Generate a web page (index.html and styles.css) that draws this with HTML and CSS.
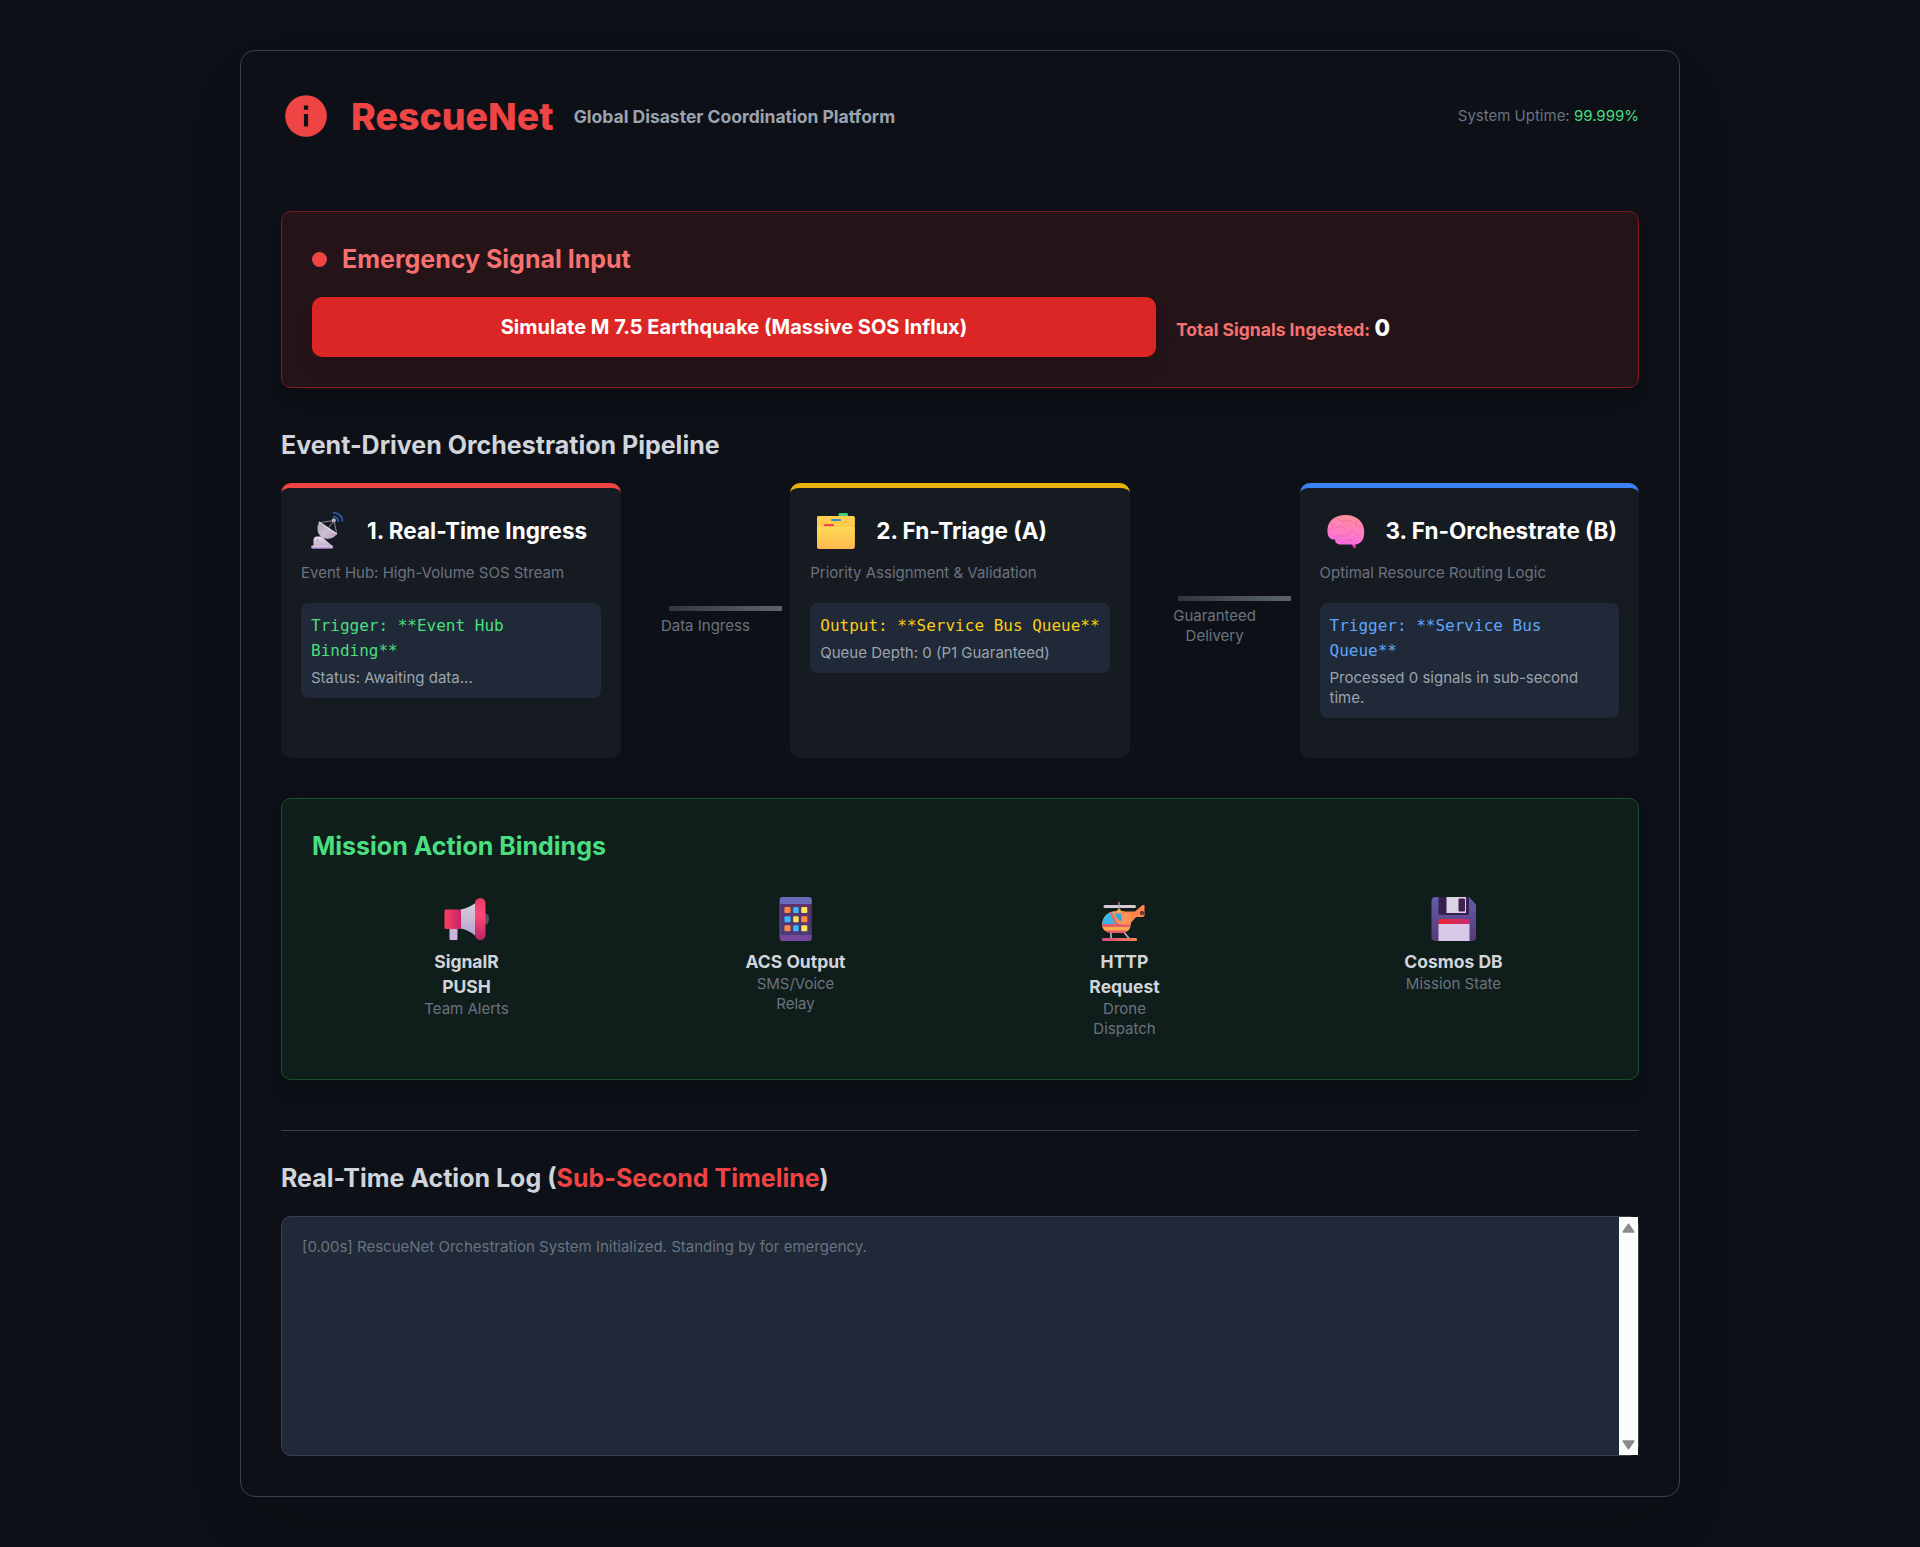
FILE: index.html
```html
<!DOCTYPE html>
<html lang="en">
<head>
<meta charset="UTF-8">
<title>RescueNet</title>
<link rel="stylesheet" href="styles.css">
</head>
<body>
<main class="shell">
  <header class="header">
    <div class="brand">
      <svg class="brand-icon" viewBox="0 0 24 24"><path fill="#ef4444" fill-rule="evenodd" d="M12 2a10 10 0 1 0 0 20 10 10 0 0 0 0-20zm1 15h-2v-6h2v6zm0-8h-2V7h2v2z"/></svg>
      <h1 class="brand-name">RescueNet</h1>
      <span class="brand-tag">Global Disaster Coordination Platform</span>
    </div>
    <div class="uptime">System Uptime: <span class="uptime-value">99.999%</span></div>
  </header>

  <section class="panel panel-red">
    <h2 class="panel-title title-red"><span class="dot"></span>Emergency Signal Input</h2>
    <div class="signal-row">
      <div class="signal-action"><button class="simulate">Simulate M 7.5 Earthquake (Massive SOS Influx)</button></div>
      <div class="signal-total">Total Signals Ingested: <span class="signal-count">0</span></div>
    </div>
  </section>

  <h2 class="section-title">Event-Driven Orchestration Pipeline</h2>
  <section class="pipeline">
    <article class="stage stage-red">
      <div class="stage-head">
        <svg class="stage-icon" viewBox="0 0 50 45">
          <defs>
            <linearGradient id="dish" x1="0" y1="0" x2="1" y2="1"><stop offset="0" stop-color="#a99fac"/><stop offset=".5" stop-color="#cdbfd2"/><stop offset="1" stop-color="#b39cbc"/></linearGradient>
            <linearGradient id="base" x1="0" y1="0" x2="0" y2="1"><stop offset="0" stop-color="#e6e0ea"/><stop offset="1" stop-color="#c3aed2"/></linearGradient>
          </defs>
          <path d="M12.500 38.500V32q0-3.500 3.500-3.500h4.500l11 9.500z" fill="url(#base)"/>
          <rect x="10.300" y="37.500" width="21.700" height="3" rx="1" fill="#d0c2db"/>
          <rect x="10.800" y="39.700" width="20.700" height="1" fill="#9869b8"/>
          <circle cx="16.700" cy="32.500" r="1.300" fill="#b9aec0"/>
          <path d="M18 14C14.500 21 17 28.500 23.500 30.500c5 1.300 9.500-.5 12.500-4.500z" fill="url(#dish)"/>
          <path d="M18 14l18 12" stroke="#e6dfe9" stroke-width="1.300"/>
          <path d="M20 14.500L33 12.500l2.500 12M33 12.500L27.500 20" fill="none" stroke="#8f8993" stroke-width="1"/>
          <circle cx="32.800" cy="12.300" r="2.100" fill="#b6afb9"/>
          <path d="M32 8.600a4.800 4.800 0 0 1 5.300 5.200M32 4.700a8.700 8.700 0 0 1 9.400 9.100" fill="none" stroke="#2b62c4" stroke-width="1.500"/>
        </svg>
        <h3 class="stage-title">1. Real-Time Ingress</h3>
      </div>
      <p class="stage-sub">Event Hub: High-Volume SOS Stream</p>
      <div class="binding">
        <p class="binding-code code-green">Trigger: **Event Hub Binding**</p>
        <p class="binding-note">Status: Awaiting data...</p>
      </div>
    </article>
    <div class="link"><span class="link-line"></span><span class="link-label">Data Ingress</span></div>
    <article class="stage stage-yellow">
      <div class="stage-head">
        <svg class="stage-icon" viewBox="0 0 50 45">
          <defs><linearGradient id="folder" x1="0" y1="0" x2="0" y2="1"><stop offset="0" stop-color="#ffda55"/><stop offset="1" stop-color="#ffb84f"/></linearGradient></defs>
          <rect x="28.500" y="5" width="9.500" height="5" rx="1.500" fill="#43cf7c"/>
          <rect x="7" y="8" width="37.700" height="32" rx="2" fill="#f5bd3c"/>
          <rect x="7" y="8" width="37.700" height="10" rx="2" fill="#ffce50"/>
          <rect x="21" y="11" width="10" height="2.300" rx="1" fill="#318fcb"/>
          <rect x="7.400" y="13" width="37" height="10" rx="2" fill="#ffc94a"/>
          <rect x="14" y="16" width="10" height="2.600" rx="1" fill="#fb4055"/>
          <rect x="7" y="18.500" width="37.700" height="22.500" rx="2" fill="url(#folder)"/>
        </svg>
        <h3 class="stage-title">2. Fn-Triage (A)</h3>
      </div>
      <p class="stage-sub">Priority Assignment &amp; Validation</p>
      <div class="binding">
        <p class="binding-code code-yellow">Output: **Service Bus Queue**</p>
        <p class="binding-note">Queue Depth: 0 (P1 Guaranteed)</p>
      </div>
    </article>
    <div class="link"><span class="link-line"></span><span class="link-label">Guaranteed<br>Delivery</span></div>
    <article class="stage stage-blue">
      <div class="stage-head">
        <svg class="stage-icon" viewBox="0 0 50 45">
          <defs><linearGradient id="brain" x1=".6" y1="0" x2=".4" y2="1"><stop offset="0" stop-color="#fb9098"/><stop offset=".5" stop-color="#ff80bd"/><stop offset="1" stop-color="#f96be4"/></linearGradient></defs>
          <path d="M31 34h5l-.5 6.500q-2-.2-4-4.500z" fill="#e83bb0"/>
          <path d="M7.500 24.500C6.500 14 14 7 25.500 7S45 14.500 44.200 25c-.2 7.500-4 11.500-10 11.500H21c-4.500 0-6-2.500-6-5-4 .5-7.200-2-7.500-7z" fill="url(#brain)"/>
          <path d="M8 22c4-.5 5-3 4-7M15 31c1-3 4-3.500 7-3 5 .5 9-2 10-6M18 10c1 3 4 4 7 3s6-1 7 1M13 23c3-5 8-6 12-3M36 13c-1 4 1 6 5 6M32 22c3 1 6 3 6 7M25 35c0-3 4-4 8-3" fill="none" stroke="#dc4f9c" stroke-width="1" stroke-linecap="round" opacity=".45"/>
        </svg>
        <h3 class="stage-title">3. Fn-Orchestrate (B)</h3>
      </div>
      <p class="stage-sub">Optimal Resource Routing Logic</p>
      <div class="binding">
        <p class="binding-code code-blue">Trigger: **Service Bus Queue**</p>
        <p class="binding-note">Processed 0 signals in sub-second time.</p>
      </div>
    </article>
  </section>

  <section class="panel panel-green">
    <h2 class="panel-title title-green">Mission Action Bindings</h2>
    <div class="actions">
      <div class="action">
        <svg class="action-icon" viewBox="0 0 60 50">
          <defs>
            <linearGradient id="horn" x1="0" y1="0" x2="0" y2="1"><stop offset="0" stop-color="#d5d1d8"/><stop offset="1" stop-color="#b8a0d5"/></linearGradient>
            <linearGradient id="rim" x1="0" y1="0" x2="0" y2="1"><stop offset="0" stop-color="#e43b62"/><stop offset=".4" stop-color="#ff4776"/><stop offset="1" stop-color="#b92564"/></linearGradient>
            <linearGradient id="grip"><stop offset="0" stop-color="#fb3e61"/><stop offset="1" stop-color="#c92368"/></linearGradient>
          </defs>
          <ellipse cx="48.500" cy="25" rx="3.500" ry="5.500" fill="#594e63"/>
          <rect x="12.500" y="34" width="8" height="12" rx="1" fill="#c8b4df"/>
          <path d="M23.500 15.500c6-1 10.500-3.500 15-6.500v33c-4.500-4-9-6.500-15-7.500z" fill="url(#horn)"/>
          <rect x="7.500" y="15.500" width="16.500" height="19.500" rx="1.500" fill="url(#grip)"/>
          <rect x="38" y="4" width="10.500" height="42" rx="5.200" fill="url(#rim)"/>
        </svg>
        <p class="action-name">SignalR PUSH</p>
        <p class="action-sub">Team Alerts</p>
      </div>
      <div class="action">
        <svg class="action-icon" viewBox="0 0 60 50">
          <defs>
            <linearGradient id="phone" x1="0" y1="0" x2="0" y2="1"><stop offset="0" stop-color="#633069"/><stop offset="1" stop-color="#493c7d"/></linearGradient>
          </defs>
          <rect x="13.700" y="3" width="32" height="44" rx="3" fill="url(#phone)"/>
          <path d="M13.700 10V6q0-3 3-3h26q3 0 3 3v4z" fill="#686bb8"/>
          <path d="M13.700 41v3q0 3 3 3h26q3 0 3-3v-3z" fill="#74479b"/>
          <path d="M14.200 10v31" stroke="#58568e"/>
          <g fill="#ff8b43"><rect x="18.500" y="13" width="6" height="6" rx="1"/><rect x="35.300" y="22.200" width="6" height="6" rx="1"/><rect x="18.500" y="31.300" width="6" height="6" rx="1"/></g>
          <g fill="#32bdff"><rect x="27.200" y="13" width="5.400" height="6" rx="1"/><rect x="18.500" y="22.200" width="6" height="6" rx="1"/><rect x="27.200" y="31.300" width="5.400" height="6" rx="1"/></g>
          <g fill="#ffe552"><rect x="35.300" y="13" width="6" height="6" rx="1"/><rect x="27.200" y="22.200" width="5.400" height="6" rx="1"/><rect x="35.300" y="31.300" width="6" height="6" rx="1"/></g>
        </svg>
        <p class="action-name">ACS Output</p>
        <p class="action-sub">SMS/Voice Relay</p>
      </div>
      <div class="action">
        <svg class="action-icon" viewBox="0 0 60 50">
          <defs>
            <linearGradient id="skid"><stop offset="0" stop-color="#d9478c"/><stop offset="1" stop-color="#ff824e"/></linearGradient>
            <clipPath id="cabin"><path d="M7 30C8 22 14 17 21 17h5c7 0 10 5 10 11 0 7-4 11-9 11H17c-6 0-10-4-10-9z"/></clipPath>
          </defs>
          <path d="M16 37v8M28 37l6.500 8" stroke="#b9a9ba" stroke-width="1.700"/>
          <rect x="7" y="44" width="35" height="3" rx="1.300" fill="url(#skid)"/>
          <path d="M23 17.500h17l7.500-6.500h2v11l-1.500 1H41L35 30z" fill="#ff834b"/>
          <g clip-path="url(#cabin)">
            <path d="M6 16h31v24H6z" fill="#ff9257"/>
            <path d="M6 16h10l7 14H6z" fill="#38b5e6"/>
            <path d="M15 16l8 14h-3l-5.500-12z" fill="#ef6d58"/>
            <path d="M6 30h16l14 1v9H6z" fill="#e45b6d"/>
            <path d="M6 33h31v3.500H6z" fill="#ffad4c"/>
          </g>
          <path d="M20 19.500h5q1.500 0 1.500 1.500v6.500q-4-1-6.500-8z" fill="#31a9e0"/>
          <circle cx="47" cy="19" r="2.100" fill="#401f26"/>
          <circle cx="47" cy="19" r=".6" fill="#fff"/>
          <rect x="8.500" y="11" width="32.500" height="3" rx="1.500" fill="#d8cad4"/>
          <path d="M24 9v8" stroke="#b5a5a8" stroke-width="1.300"/>
          <path d="M24 7.800v2" stroke="#c97442" stroke-width="1.300"/>
          <rect x="22" y="15.500" width="4" height="2.500" rx="1" fill="#f4b928"/>
        </svg>
        <p class="action-name">HTTP Request</p>
        <p class="action-sub">Drone Dispatch</p>
      </div>
      <div class="action">
        <svg class="action-icon" viewBox="0 0 60 50">
          <defs>
            <linearGradient id="disk" x1="0" y1="0" x2="0" y2="1"><stop offset="0" stop-color="#615eaa"/><stop offset="1" stop-color="#5a397b"/></linearGradient>
            <linearGradient id="stripe"><stop offset="0" stop-color="#e9252f"/><stop offset="1" stop-color="#cb2c70"/></linearGradient>
          </defs>
          <path d="M11.500 3H45l7 7.500V43q0 4-4 4H11.500q-4 0-4-4V7q0-4 4-4z" fill="url(#disk)"/>
          <path d="M14.500 3H45v16q0 2-2 2H16.500q-2 0-2-2z" fill="#35204f"/>
          <path d="M22.500 3H42v16H22.500z" fill="#dcd3e4"/>
          <rect x="34.500" y="4.500" width="6.500" height="13" rx="1" fill="#40204f"/>
          <rect x="14.500" y="25" width="31" height="6" rx="1" fill="url(#stripe)"/>
          <path d="M14.500 30h31v17h-31z" fill="#d8cae6"/>
        </svg>
        <p class="action-name">Cosmos DB</p>
        <p class="action-sub">Mission State</p>
      </div>
    </div>
  </section>

  <section class="log-section">
    <h2 class="section-title">Real-Time Action Log (<span class="accent">Sub-Second Timeline</span>)</h2>
    <div class="log">
      <p class="log-line">[0.00s] RescueNet Orchestration System Initialized. Standing by for emergency.</p>
      <div class="scrollbar">
        <svg class="arrow" viewBox="0 0 13 10"><path d="M6.500 1.200L11.800 9H1.200z" fill="#8b8b8b" stroke="#8b8b8b" stroke-width="1.500" stroke-linejoin="round"/></svg>
        <svg class="arrow" viewBox="0 0 13 10"><path d="M6.500 8.800L11.800 1H1.200z" fill="#8b8b8b" stroke="#8b8b8b" stroke-width="1.500" stroke-linejoin="round"/></svg>
      </div>
    </div>
  </section>
</main>
</body>
</html>
```
FILE: styles.css
```css
* { box-sizing: border-box; }

body {
  margin: 0;
  padding: 50px 240px;
  background: #0d1117;
  color: #d1d5db;
  font-family: Inter, "Liberation Sans", sans-serif;
  font-size: 20px;
  line-height: 30px;
}

h1, h2, h3, p { margin: 0; }

.shell {
  height: 1447px;
  padding: 40px;
  border: 1px solid #374151;
  border-radius: 15px;
  background: #0d1117;
  box-shadow: 0 31px 62px -15px rgba(0, 0, 0, .15);
}

.header {
  display: flex;
  justify-content: space-between;
  align-items: center;
  height: 50px;
  margin-bottom: 70px;
}
.brand { display: flex; align-items: center; gap: 20px; }
.brand-icon { width: 50px; height: 50px; }
.brand-name { color: #ef4444; font-size: 37.5px; font-weight: 800; line-height: 45px; }
.brand-tag { color: #9ca3af; font-size: 17.5px; font-weight: 700; line-height: 25px; }
.uptime { color: #6b7280; font-size: 15px; line-height: 20px; }
.uptime-value { color: #4ade80; }

.panel {
  padding: 30px;
  border: 1px solid;
  border-radius: 10px;
  box-shadow: 0 12px 19px -4px rgba(0, 0, 0, .1), 0 5px 8px -5px rgba(0, 0, 0, .1);
}
.panel-red { height: 177px; margin-bottom: 40px; border-color: #7f1d1d; background: #241417; }
.panel-green { height: 282px; border-color: #14532d; background: #0f1e1b; }
.panel-title {
  display: flex;
  align-items: center;
  gap: 15px;
  margin-bottom: 20px;
  font-size: 25px;
  font-weight: 700;
  line-height: 35px;
}
.title-red { color: #f87171; }
.title-green { color: #4ade80; }
.dot { width: 15px; height: 15px; border-radius: 50%; background: #ef4444; }

.signal-row { display: flex; align-items: center; }
.signal-action { flex: 0 0 66.6667%; padding-right: 20px; }
.simulate {
  display: block;
  width: 100%;
  height: 60px;
  border: 0;
  border-radius: 10px;
  background: #dc2626;
  box-shadow: 0 12px 19px -4px rgba(0, 0, 0, .1);
  color: #fff;
  font: 700 20px/30px Inter, sans-serif;
}
.signal-total { padding-top: 2px; color: #f87171; font-size: 17.5px; font-weight: 700; line-height: 35px; }
.signal-count { color: #fff; font-size: 22.5px; font-weight: 800; }

.section-title { margin-bottom: 20px; font-size: 25px; font-weight: 700; line-height: 35px; }
.accent { color: #ef4444; }

.pipeline {
  display: grid;
  grid-template-columns: 25% 12.5% 25% 12.5% 25%;
  height: 275px;
  margin-bottom: 40px;
}
.stage { padding: 20px; border-top: 5px solid; border-radius: 10px; background: #161b22; }
.stage-red { border-color: #ef4444; }
.stage-yellow { border-color: #eab308; }
.stage-blue { border-color: #3b82f6; }
.stage-head { display: flex; align-items: center; gap: 16px; height: 45px; margin-bottom: 10px; }
.stage-icon { flex: none; width: 50px; height: 45px; }
.stage-title { color: #fff; font-size: 22.5px; font-weight: 700; line-height: 35px; white-space: nowrap; }
.stage-sub { margin-bottom: 20px; color: #6b7280; font-size: 15px; line-height: 20px; }
.binding { padding: 10px; border-radius: 7.5px; background: #1f2937; }
.binding-code { font: 16px/25px "DejaVu Sans Mono", monospace; }
.code-green { color: #4ade80; }
.code-yellow { color: #facc15; }
.code-blue { color: #60a5fa; }
.binding-note { margin-top: 5px; color: #9ca3af; font-size: 15px; line-height: 20px; }

.link { display: flex; flex-direction: column; justify-content: center; gap: 5px; }
.link-line { width: 113px; height: 5px; margin-left: 48.5px; background: linear-gradient(90deg, #30363d, #5b646d); }
.link-label { color: #6b7280; font-size: 15px; line-height: 20px; text-align: center; }

.actions { display: flex; justify-content: space-around; gap: 20px; }
.action { width: 120px; padding: 10px; text-align: center; }
.action-icon { display: block; width: 60px; height: 50px; margin: 0 auto 5px; }
.action-name { font-size: 17.5px; font-weight: 700; line-height: 25px; }
.action-sub { color: #6b7280; font-size: 15px; line-height: 20px; }

.log-section { margin-top: 50px; padding-top: 30px; border-top: 1px solid #374151; }
.log {
  display: flex;
  justify-content: space-between;
  height: 240px;
  border: 1px solid #374151;
  border-radius: 10px;
  background: #1f2937;
}
.log-line { padding: 20px; color: #6b7280; font-size: 15px; line-height: 20px; }
.scrollbar {
  display: flex;
  flex-direction: column;
  justify-content: space-between;
  align-items: center;
  width: 19px;
  padding: 6px 0 5px;
  background: #fcfcfc;
}
.arrow { width: 13px; height: 10px; }
```
